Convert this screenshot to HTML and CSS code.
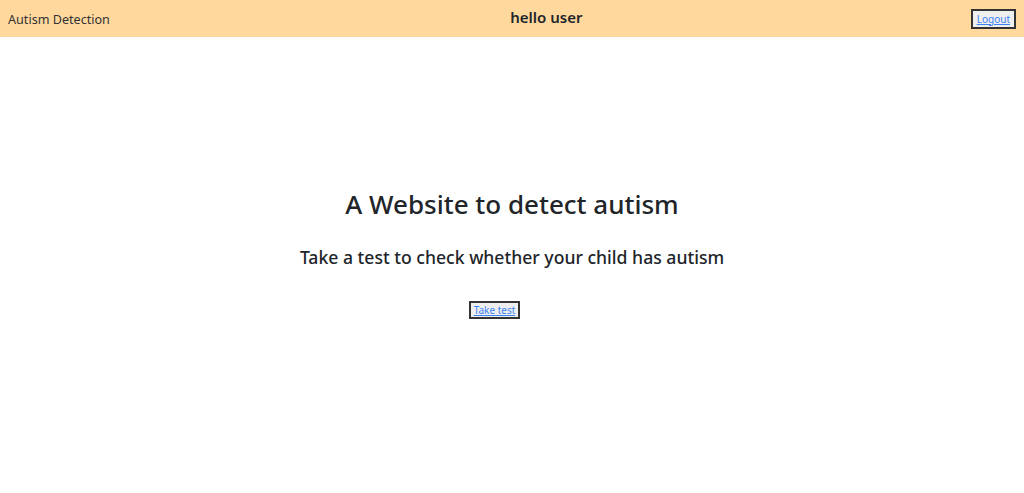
FILE: index.html
```html
<!DOCTYPE html>
<html>
<head>
<meta charset="utf-8">
<link rel="stylesheet" href="styles.css">
</head>
<body>
<nav class="navbar">
  <span class="brand">Autism Detection</span>
  <span class="greeting">hello user</span>
  <button class="btn"><a href="#">Logout</a></button>
</nav>
<main class="hero">
  <h2 class="title">A Website to detect autism</h2>
  <h4 class="subtitle">Take a test to check whether your child has autism</h4>
  <button class="btn"><a href="#">Take test</a></button>
</main>
</body>
</html>
```
FILE: styles.css
```css
* { box-sizing: border-box; }
body {
  margin: 0;
  font-family: "Noto Sans", "Open Sans", sans-serif;
  color: #212529;
  background: #fff;
}
.navbar {
  height: 37px;
  background: #ffd89e;
  display: flex;
  justify-content: space-between;
  align-items: center;
  padding: 0 8px 0 8px;
}
.brand {
  font-size: 12.6px;
  color: #333;
  margin-top: 1px;
}
.greeting {
  font-size: 15px;
  font-weight: 600;
  margin-top: -4px;
  margin-left: 12px;
}
.btn {
  font-family: "Noto Sans", sans-serif;
  font-size: 10px;
  background: #efefef;
  border: 2px solid #333;
  padding: 1px 3px;
  line-height: 14px;
}
.btn a { color: #3b82f6; }
.navbar .btn { padding: 1px 4px; line-height: 14px; }
.hero {
  display: flex;
  flex-direction: column;
  align-items: center;
  padding-top: 152px;
}
.title {
  margin: 0;
  font-size: 26px;
  font-weight: 500;
  line-height: 1.2;
}
.subtitle {
  margin: 27px 0 0;
  font-size: 17.6px;
  font-weight: 500;
  line-height: 1.2;
}
.hero .btn { margin-top: 33px; margin-left: -35px; padding: 0 3px; }
```
